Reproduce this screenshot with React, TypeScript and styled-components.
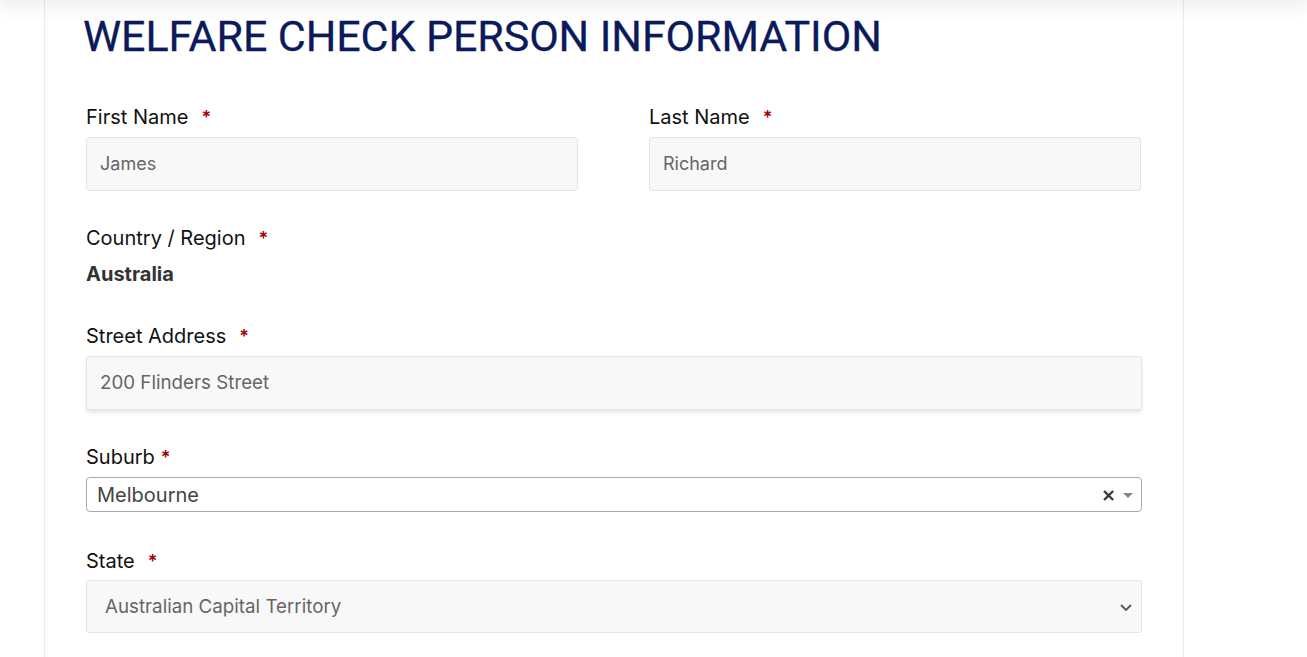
import React from "react";
import styled, { createGlobalStyle } from "styled-components";

const GlobalStyle = createGlobalStyle`
  html, body { margin: 0; padding: 0; background: #ffffff; }
  body { font-family: Inter, "Noto Sans", sans-serif; overflow: hidden; }
  * { box-sizing: border-box; }
`;

const TopShade = styled.div`
  position: sticky;
  top: 0;
  height: 0;
  z-index: 5;
  box-shadow: 0 0 18px 4px rgba(0, 0, 0, 0.14);
`;

const Page = styled.div`
  height: 657px;
  padding-left: 44px;
`;

const Card = styled.section`
  width: 1140px;
  height: 100%;
  border-left: 1px solid #ececec;
  border-right: 1px solid #ececec;
  background: #fff;
`;

const Title = styled.h1`
  margin: 0;
  padding: 11px 0 0 38px;
  font-family: Roboto, sans-serif;
  font-weight: 400;
  font-size: 43px;
  line-height: 50px;
  color: #0b1a5b;
  letter-spacing: -0.1px;
  -webkit-text-stroke: 0.3px #0b1a5b;
`;

const Form = styled.div`
  padding: 43px 41px 0 41px;
`;

const Row = styled.div`
  display: grid;
  grid-template-columns: 492px 492px;
  column-gap: 71px;
`;

const Field = styled.div<{ $gap?: number }>`
  display: flex;
  flex-direction: column;
  margin-bottom: ${(p) => p.$gap ?? 34}px;
`;

const Label = styled.label<{ $below?: number }>`
  font-size: 20px;
  line-height: 27px;
  color: #111;
  margin-bottom: ${(p) => p.$below ?? 6}px;
  display: flex;
  align-items: center;
`;

const Req = styled.span<{ $gap?: number }>`
  color: #a30000;
  margin-left: ${(p) => p.$gap ?? 13}px;
  font-weight: 600;
  font-size: 18px;
`;

const Input = styled.div<{ $shadow?: boolean; $size?: number }>`
  height: 54px;
  background: #f8f8f8;
  border: 1px solid #e4e4e4;
  border-radius: 3px;
  padding: 0 13px 1px;
  display: flex;
  align-items: center;
  font-size: ${(p) => p.$size ?? 18}px;
  color: #666;
  box-shadow: ${(p) => (p.$shadow ? "0 3px 5px -1px rgba(0,0,0,0.13)" : "none")};
`;

const Static = styled.div`
  font-size: 20px;
  font-weight: 700;
  color: #333;
  line-height: 24px;
  margin-top: 4px;
`;

const Combo = styled.div`
  height: 35px;
  border: 1px solid #a8a8a8;
  border-radius: 4px;
  padding: 0 8px 0 10px;
  display: flex;
  align-items: center;
  font-size: 20px;
  color: #444;
`;

const ComboValue = styled.span`
  flex: 1;
`;

const Clear = styled.span`
  font-family: "DejaVu Sans", sans-serif;
  font-weight: 700;
  font-size: 18px;
  color: #333;
  margin-right: 7px;
  line-height: 1;
`;

const Arrow = styled.span`
  width: 0;
  height: 0;
  border-left: 5px solid transparent;
  border-right: 5px solid transparent;
  border-top: 5px solid #888;
  margin-top: 1px;
`;

const Select = styled.div`
  height: 53px;
  background: #f8f8f8;
  border: 1px solid #e4e4e4;
  border-radius: 3px;
  padding: 0 8px 0 18px;
  display: flex;
  align-items: center;
  font-size: 18.75px;
  color: #666;
`;

const Chevron = () => (
  <svg width="14" height="14" viewBox="0 0 14 14" style={{ marginLeft: "auto" }}>
    <path d="M2 5 L7 10 L12 5" fill="none" stroke="#555" strokeWidth="1.8" />
  </svg>
);

export default function App() {
  return (
    <>
      <GlobalStyle />
      <TopShade />
      <Page>
        <Card>
          <Title>WELFARE CHECK PERSON INFORMATION</Title>
          <Form>
            <Row>
              <Field $gap={34}>
                <Label>
                  First Name <Req>*</Req>
                </Label>
                <Input>James</Input>
              </Field>
              <Field $gap={34}>
                <Label>
                  Last Name <Req>*</Req>
                </Label>
                <Input>Richard</Input>
              </Field>
            </Row>
            <Field $gap={37}>
              <Label>
                Country / Region <Req>*</Req>
              </Label>
              <Static>Australia</Static>
            </Field>
            <Field $gap={34}>
              <Label>
                Street Address <Req>*</Req>
              </Label>
              <Input $shadow $size={18.75}>200 Flinders Street</Input>
            </Field>
            <Field $gap={36}>
              <Label>
                Suburb <Req $gap={6}>*</Req>
              </Label>
              <Combo>
                <ComboValue>Melbourne</ComboValue>
                <Clear>×</Clear>
                <Arrow />
              </Combo>
            </Field>
            <Field>
              <Label $below={5}>
                State <Req>*</Req>
              </Label>
              <Select>
                Australian Capital Territory
                <Chevron />
              </Select>
            </Field>
          </Form>
        </Card>
      </Page>
    </>
  );
}
